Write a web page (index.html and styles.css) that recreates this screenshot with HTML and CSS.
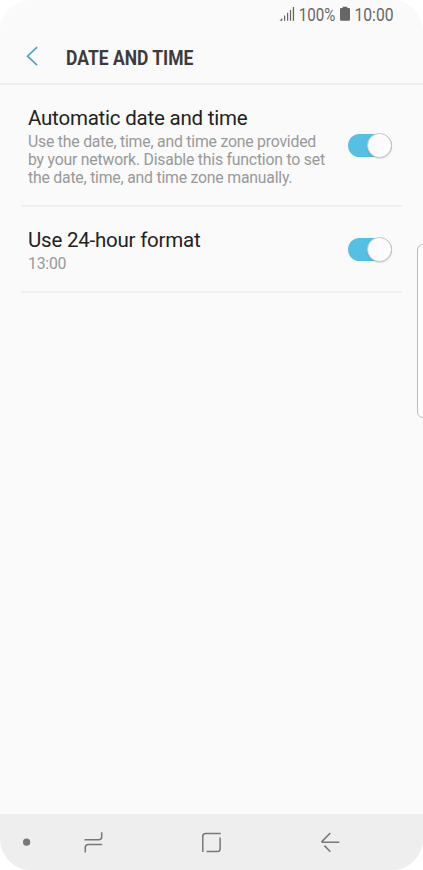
FILE: index.html
```html
<!DOCTYPE html>
<html lang="en">
<head>
<meta charset="utf-8">
<title>Date and time</title>
<link rel="stylesheet" href="styles.css">
</head>
<body>
<div class="phone">
  <div class="status">
    <svg class="status-icons" width="123" height="28" viewBox="0 0 123 28">
      <path class="solid" d="M9.5 20.8L12.3 18v2.8zM14 15.5h1.2v5.3H14zM17 12.8h1.2v8H17zM19.9 10h1.2v10.8h-1.2zM22.8 7h1.3v13.8h-1.3z"/>
      <text x="28.8" y="20.5" textLength="36.5" lengthAdjust="spacingAndGlyphs">100%</text>
      <path class="solid" d="M72.7 6.7h4.6v1.2h1.5q1.2 0 1.2 1.2v10.5q0 1.2-1.2 1.2h-7.6q-1.2 0-1.2-1.2V9.1q0-1.2 1.2-1.2h1.5z"/>
      <text x="84.5" y="20.5" textLength="39" lengthAdjust="spacingAndGlyphs">10:00</text>
    </svg>
  </div>
  <header class="header">
    <svg class="back" width="12" height="20" viewBox="0 0 12 20"><path d="M11.1 1.1L1.5 10.2l9.6 9"/></svg>
    <svg class="title" width="132" height="28" viewBox="0 0 132 28"><text x="0" y="22.6" textLength="127.3" lengthAdjust="spacingAndGlyphs">DATE AND TIME</text></svg>
  </header>
  <main class="list">
    <section class="row row-auto">
      <div class="copy">
        <h2>Automatic date and time</h2>
        <p>Use the date, time, and time zone provided<br>by your network. Disable this function to set<br>the date, time, and time zone manually.</p>
      </div>
      <div class="toggle"><span class="knob"></span></div>
    </section>
    <section class="row row-format">
      <div class="copy">
        <h2>Use 24-hour format</h2>
        <p>13:00</p>
      </div>
      <div class="toggle"><span class="knob"></span></div>
    </section>
  </main>
  <nav class="nav">
    <svg width="423" height="56" viewBox="0 0 423 56">
      <circle cx="26.6" cy="28.2" r="3.6"/>
      <path d="M84.5 25.8h14.2q3 0 3-3v-4.6M102.2 30.4H88.3q-3 0-3 3v5"/>
      <path d="M220.7 19.4h-15q-2.9 0-2.9 2.9v15.8M220.1 23.4v11.4q0 2.8-2.8 2.8h-10.7"/>
      <path d="M339.3 28.3h-16.5q-1.6 0-.5-1.2l8-8.1M324.4 31.6l6 6.1"/>
    </svg>
  </nav>
  <div class="edge-handle"></div>
</div>
</body>
</html>
```
FILE: styles.css
```css
* { box-sizing: border-box; }
body { margin: 0; background: #fff; font-family: Roboto, "Liberation Sans", sans-serif; }
.phone {
  position: relative;
  display: flex;
  flex-direction: column;
  width: 423px;
  height: 870px;
  overflow: hidden;
  border-radius: 31px;
  background: #fafafa;
}
svg { display: block; }
.status { display: flex; justify-content: flex-end; height: 28px; padding-right: 30px; }
.status-icons { overflow: visible; }
.status text { font-size: 17.6px; fill: #666; }
.solid { fill: #666; }
.header { display: flex; align-items: center; height: 57px; padding: 1px 0 0 26px; border-bottom: 2px solid #eee; }
.back { fill: none; stroke: #4aa3c7; stroke-width: 1.6; }
.title { margin-left: 28px; overflow: visible; }
.title text { font-size: 20px; font-weight: 700; fill: #3c3c3c; }
.list { flex: 1; padding: 0 21px; }
.row { display: flex; justify-content: space-between; padding: 0 9px 0 7px; border-bottom: 2px solid #f0f0f0; }
.row-auto { height: 122px; padding-top: 21px; }
.row-format { height: 86px; padding-top: 21px; }
h2 { margin: 0; font-size: 20.5px; letter-spacing: -.22px; line-height: 24px; font-weight: 400; color: #222; white-space: nowrap; }
p { margin: 3px 0 0; font-size: 15.8px; letter-spacing: -.21px; line-height: 18px; color: #999; white-space: nowrap; }
.toggle { position: relative; flex: none; width: 44px; height: 23px; margin: 28px 1px 0 0; border-radius: 12px; background: #56bfe4; }
.row-format .toggle { margin-top: 10px; }
.knob { position: absolute; right: 0; top: -1px; width: 25px; height: 25px; border-radius: 50%; border: 1px solid #c8c8c8; background: #fcfcfc; box-shadow: 0 1px 1px #0002; }
.nav { height: 56px; background: #eee; }
.nav path { fill: none; stroke: #777; stroke-width: 1.5; }
.nav circle { fill: #777; }
.edge-handle { position: absolute; left: 417px; top: 244px; width: 12px; height: 174px; border: 1px solid #bbb; border-radius: 7px; background: #fdfdfd; }
```
